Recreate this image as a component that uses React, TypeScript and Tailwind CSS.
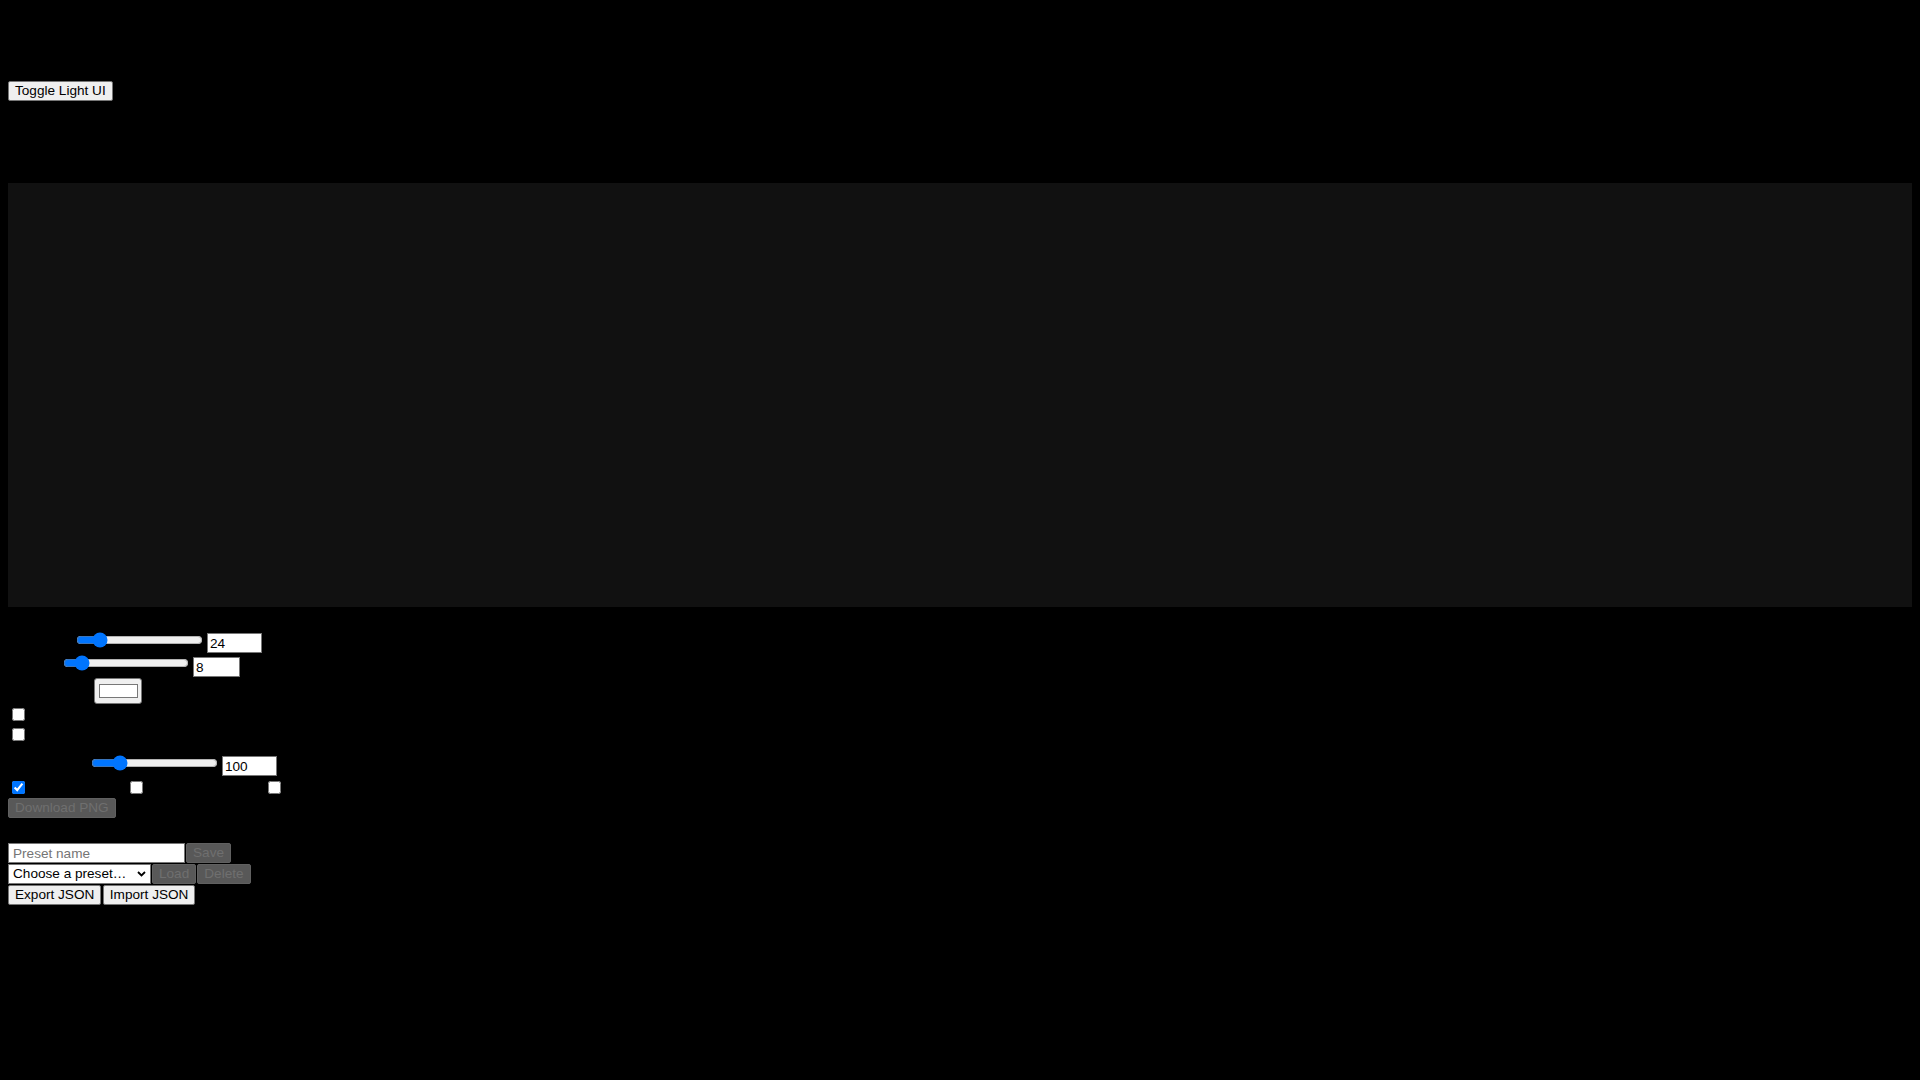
import React from "react";

const btn =
  "h-[20px] px-[6px] bg-[#efefef] border border-[#767676] rounded-[2px] text-black text-[13.6px] leading-[16px] whitespace-nowrap";
const btnDisabled =
  "h-[20px] px-[6px] bg-[#585858] border border-[#606060] rounded-[2px] text-[#6f6f6f] text-[13.6px] leading-[16px] whitespace-nowrap";
const txt =
  "h-[20px] bg-white border border-[#767676] text-black text-[13.6px] leading-[16px] px-[2px] outline-none";

export default function App() {
  return (
    <div className="min-h-screen w-full bg-black px-2 pb-8 pt-[81px] font-['Liberation_Sans',Arial,sans-serif] text-[13.6px] text-black">
      <button className={btn}>Toggle Light UI</button>

      <div className="mt-[82px] h-[424px] w-full bg-[#111111]" />

      <div className="flex flex-col">
        {/* row 1 */}
        <div className="mt-[23px] flex h-[24px] items-start">
          <input
            type="range"
            min={8}
            max={120}
            defaultValue={24}
            className="ml-[68px] mt-[2px] h-[16px] w-[127px]"
          />
          <input type="text" defaultValue="24" className={`${txt} ml-[4px] mt-[3px] w-[55px]`} />
        </div>
        {/* row 2 */}
        <div className="flex h-[24px] items-start">
          <input
            type="range"
            min={0}
            max={80}
            defaultValue={8}
            className="ml-[55px] mt-[1px] h-[16px] w-[126px]"
          />
          <input type="text" defaultValue="8" className={`${txt} ml-[4px] mt-[3px] w-[47px]`} />
        </div>
        {/* row 3: color */}
        <div className="flex h-[27px] items-start">
          <button className="ml-[86px] flex h-[26px] w-[48px] items-center justify-center rounded-[3px] border border-[#767676] bg-[#efefef]">
            <span className="block h-[14px] w-[39px] border border-[#777777] bg-white" />
          </button>
        </div>
        {/* checkbox rows */}
        <div className="flex h-[20px] items-start">
          <input type="checkbox" className="ml-[4px] mt-[3px] h-[13px] w-[13px]" />
        </div>
        <div className="flex h-[20px] items-start">
          <input type="checkbox" className="ml-[4px] mt-[3px] h-[13px] w-[13px]" />
        </div>
        {/* row slider 3 */}
        <div className="flex h-[34px] items-start">
          <input
            type="range"
            min={25}
            max={425}
            defaultValue={100}
            className="ml-[83px] mt-[10px] h-[16px] w-[127px]"
          />
          <input type="text" defaultValue="100" className={`${txt} ml-[4px] mt-[11px] w-[55px]`} />
        </div>
        {/* checkbox triple */}
        <div className="flex h-[18px] items-start">
          <input type="checkbox" defaultChecked className="ml-[4px] mt-[2px] h-[13px] w-[13px]" />
          <input type="checkbox" className="ml-[105px] mt-[2px] h-[13px] w-[13px]" />
          <input type="checkbox" className="ml-[125px] mt-[2px] h-[13px] w-[13px]" />
        </div>
        <div className="mt-[1px] flex">
          <button disabled className={btnDisabled}>
            Download PNG
          </button>
        </div>

        {/* presets */}
        <div className="mt-[25px] flex flex-col gap-[0.6px]">
          <div className="flex items-start gap-[1px]">
            <input
              type="text"
              placeholder="Preset name"
              className={`${txt} w-[177px] pl-[4px] placeholder:text-[#757575]`}
            />
            <button disabled className={btnDisabled}>
              Save
            </button>
          </div>
          <div className="flex items-start gap-[1px]">
            <div className="relative h-[20px] w-[143px]">
              <select className="h-[20px] w-[143px] appearance-none border border-[#767676] bg-white pl-[4px] text-[13.6px] leading-[16px] text-black outline-none">
                <option>Choose a preset…</option>
              </select>
              <svg
                className="pointer-events-none absolute right-[5px] top-[7px]"
                width="9"
                height="6"
                viewBox="0 0 9 6"
              >
                <path d="M1 1 L4.5 4.5 L8 1" fill="none" stroke="#000" strokeWidth="1.8" />
              </svg>
            </div>
            <button disabled className={btnDisabled}>
              Load
            </button>
            <button disabled className={btnDisabled}>
              Delete
            </button>
          </div>
          <div className="flex items-start gap-[1.5px]">
            <button className={btn}>Export JSON</button>
            <button className={btn}>Import JSON</button>
          </div>
        </div>
      </div>
    </div>
  );
}
